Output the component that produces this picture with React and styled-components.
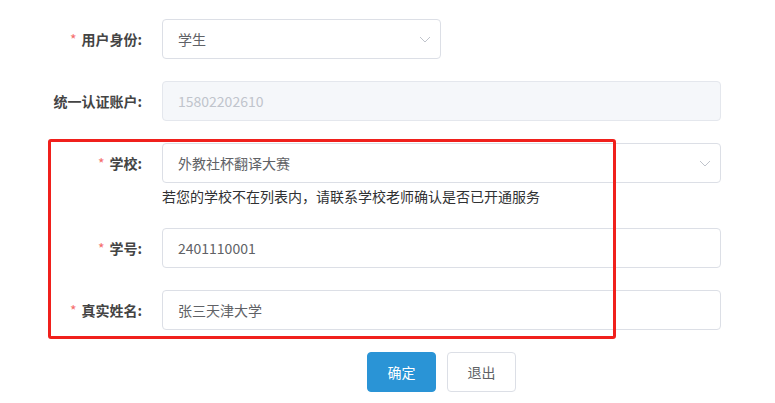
import styled, { createGlobalStyle } from "styled-components";

const GlobalStyle = createGlobalStyle`
  html, body {
    margin: 0;
    padding: 0;
    background: #ffffff;
  }
  body {
    font-family: "Microsoft YaHei", "Noto Sans CJK SC", "Noto Sans", sans-serif;
  }
`;

const Page = styled.div`
  position: relative;
  width: 775px;
  height: 403px;
  padding-top: 19px;
  box-sizing: border-box;
`;

const Form = styled.form`
  width: 721px;
  display: flex;
  flex-direction: column;
`;

const Row = styled.div`
  display: grid;
  grid-template-columns: 162px 1fr;
  margin-bottom: ${(p) => (p.$tight ? "0" : "22px")};
`;

const Label = styled.label`
  box-sizing: border-box;
  padding-right: 20px;
  text-align: right;
  line-height: 40px;
  font-size: 14px;
  font-weight: 600;
  color: #444444;
  white-space: nowrap;
`;

const Star = styled.span`
  color: #f56c6c;
  margin-right: 5px;
  font-weight: 400;
`;

const Field = styled.div`
  position: relative;
  width: ${(p) => p.$width || "100%"};
`;

const Input = styled.div`
  box-sizing: border-box;
  height: 40px;
  line-height: 38px;
  padding: 0 15px;
  border: 1px solid ${(p) => (p.$disabled ? "#e4e7ed" : "#dcdfe6")};
  border-radius: 4px;
  background: ${(p) => (p.$disabled ? "#f5f7fa" : "#ffffff")};
  color: ${(p) => (p.$disabled ? "#c0c4cc" : "#606266")};
  font-size: 14px;
`;

const Arrow = styled.svg`
  position: absolute;
  right: 10px;
  top: 14px;
  width: 12px;
  height: 12px;
`;

const Hint = styled.div`
  grid-column: 2;
  font-size: 14px;
  line-height: 24px;
  color: #303133;
  padding-top: 1px;
  margin-bottom: 20px;
`;

const Actions = styled.div`
  display: flex;
  gap: 11px;
  padding-left: 367px;
`;

const Button = styled.button`
  box-sizing: border-box;
  width: 69px;
  height: 40px;
  border-radius: 4px;
  font-family: inherit;
  font-size: 14px;
  border: 1px solid ${(p) => (p.$primary ? "#2a94d6" : "#dcdfe6")};
  background: ${(p) => (p.$primary ? "#2a94d6" : "#ffffff")};
  color: ${(p) => (p.$primary ? "#ffffff" : "#606266")};
`;

const Highlight = styled.div`
  position: absolute;
  left: 48px;
  top: 139px;
  width: 568px;
  height: 200px;
  box-sizing: border-box;
  border: 3px solid #f0201c;
  border-radius: 3px;
  pointer-events: none;
`;

const Chevron = () => (
  <Arrow viewBox="0 0 12 12">
    <path d="M1 4l5 5 5-5" fill="none" stroke="#c0c4cc" strokeWidth="1" />
  </Arrow>
);

const App = () => {
  return (
    <Page>
      <GlobalStyle />
      <Form>
        <Row>
          <Label>
            <Star>*</Star>用户身份:
          </Label>
          <Field $width="279px">
            <Input>学生</Input>
            <Chevron />
          </Field>
        </Row>
        <Row>
          <Label>统一认证账户:</Label>
          <Field>
            <Input $disabled>15802202610</Input>
          </Field>
        </Row>
        <Row $tight>
          <Label>
            <Star>*</Star>学校:
          </Label>
          <Field>
            <Input>外教社杯翻译大赛</Input>
            <Chevron />
          </Field>
          <Hint>若您的学校不在列表内，请联系学校老师确认是否已开通服务</Hint>
        </Row>
        <Row>
          <Label>
            <Star>*</Star>学号:
          </Label>
          <Field>
            <Input>2401110001</Input>
          </Field>
        </Row>
        <Row>
          <Label>
            <Star>*</Star>真实姓名:
          </Label>
          <Field>
            <Input>张三天津大学</Input>
          </Field>
        </Row>
        <Actions>
          <Button type="button" $primary>
            确定
          </Button>
          <Button type="button">退出</Button>
        </Actions>
      </Form>
      <Highlight />
    </Page>
  );
};

export default App;
